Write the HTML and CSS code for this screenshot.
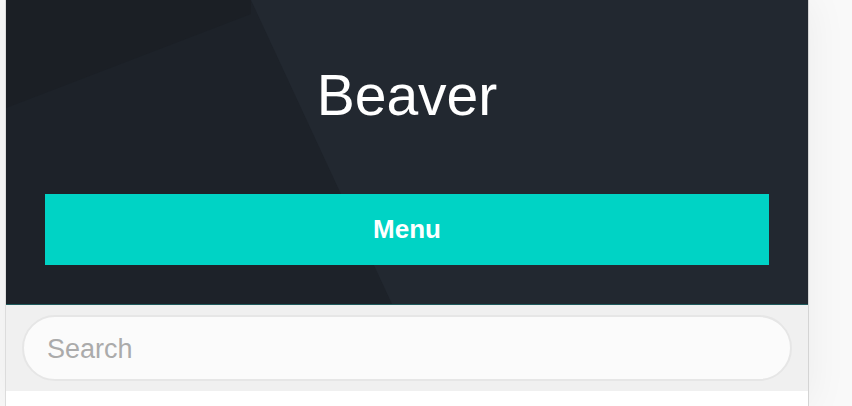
FILE: index.html
```html
<!DOCTYPE html>
<html lang="en">
<head>
<meta charset="utf-8">
<title>Beaver</title>
<link rel="stylesheet" href="styles.css">
</head>
<body>
<div class="page">
  <header class="site-header">
    <div class="shade shade-left"></div>
    <div class="shade shade-corner"></div>
    <h1 class="site-title">Beaver</h1>
    <button class="menu-btn" type="button">Menu</button>
  </header>
  <div class="search-bar">
    <input class="search-input" type="text" placeholder="Search">
  </div>
  <main class="content"></main>
</div>
</body>
</html>
```
FILE: styles.css
```css
html, body {
  margin: 0;
  padding: 0;
  height: 100%;
}
body {
  background: #f9f9f9;
  font-family: "Liberation Sans", Arial, Helvetica, sans-serif;
  overflow: hidden;
}
.page {
  margin-left: 5px;
  width: 802px;
  min-height: 100%;
  background: #ffffff;
  border-left: 1px solid #dcdcdc;
  border-right: 1px solid #d4d4d4;
  box-shadow: 0 0 40px rgba(0, 0, 0, 0.06);
}
.site-header {
  position: relative;
  overflow: hidden;
  background: #222830;
  border-bottom: 1px solid #1f5a5c;
  height: 305px;
  padding: 61px 39px 0;
  box-sizing: border-box;
  display: flex;
  flex-direction: column;
  align-items: stretch;
}
.shade {
  position: absolute;
  inset: 0;
  pointer-events: none;
}
.shade-left {
  background: #1d2229;
  clip-path: polygon(0 0, 245px 0, 386px 100%, 0 100%);
}
.shade-corner {
  background: #191d23;
  clip-path: polygon(0 0, 245px 0, 245px 14px, 0 108px);
  opacity: 0.55;
}
.site-title {
  position: relative;
  margin: 0;
  color: #ffffff;
  font-weight: 400;
  font-size: 57px;
  line-height: 68px;
  text-align: center;
}
.menu-btn {
  position: relative;
  margin-top: 65px;
  height: 71px;
  border: 0;
  background: #00d3c5;
  color: #ffffff;
  font-family: "Liberation Sans", Arial, Helvetica, sans-serif;
  font-weight: 700;
  font-size: 26px;
  padding: 0;
}
.search-bar {
  background: #f0f0f0;
  padding: 10px 16px 10px;
}
.search-input {
  display: block;
  width: 100%;
  box-sizing: border-box;
  height: 66px;
  border: 2px solid #e6e6e6;
  border-radius: 33px;
  background: #fbfbfb;
  padding: 2px 0 0 23px;
  font-family: "Liberation Sans", Arial, Helvetica, sans-serif;
  font-size: 27px;
  color: #555;
  outline: none;
}
.search-input::placeholder {
  color: #ababab;
}
.content {
  background: #ffffff;
}
```
